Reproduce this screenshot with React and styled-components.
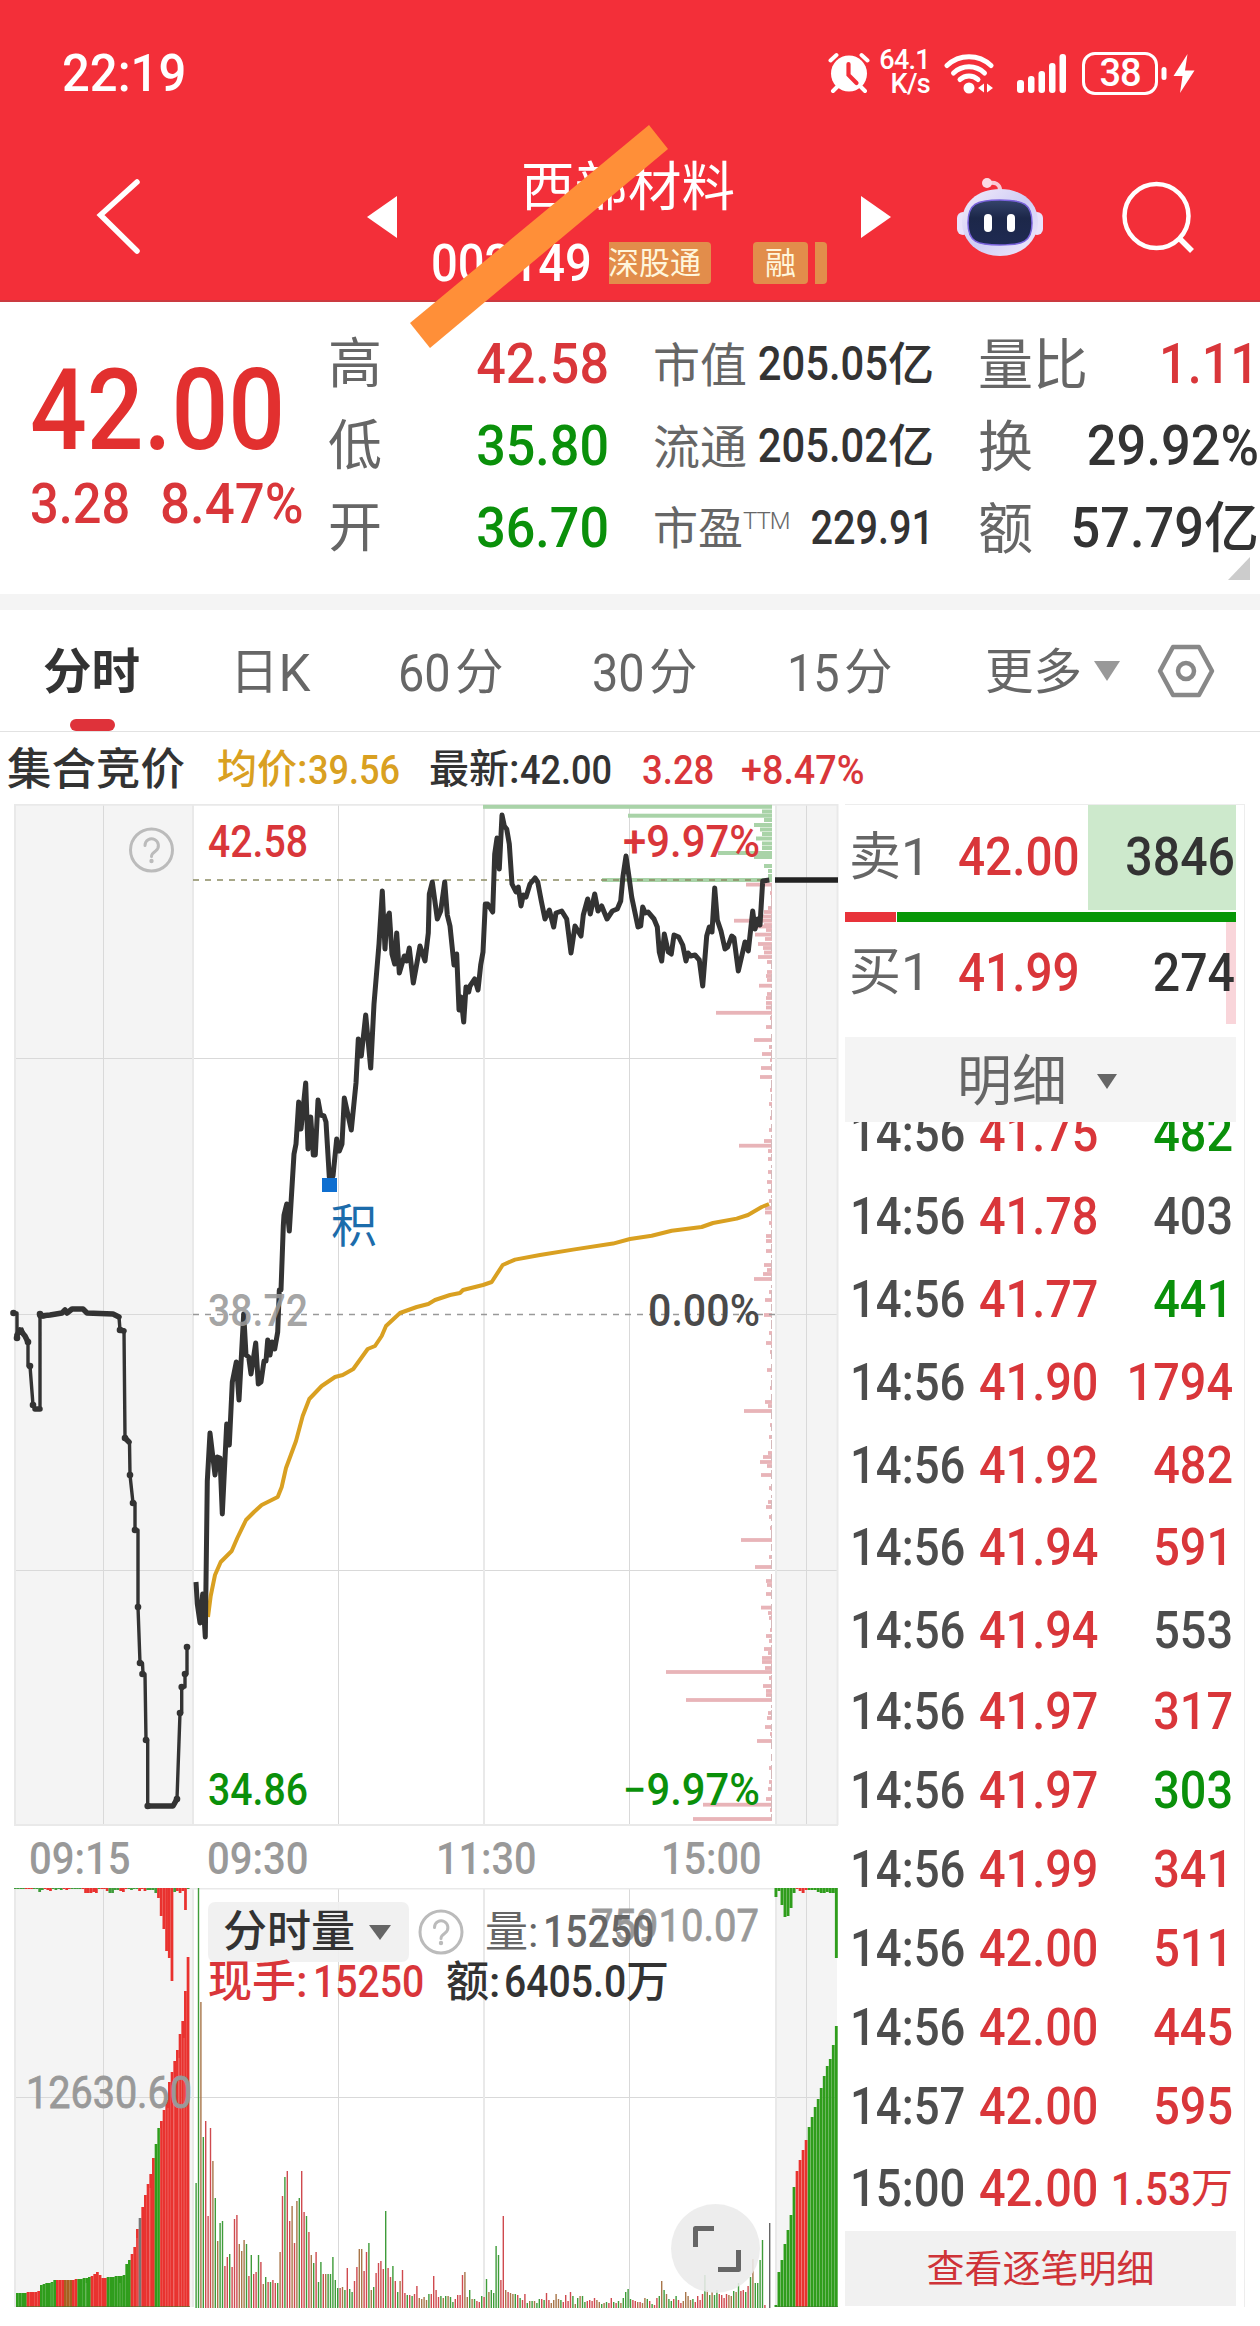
import React from 'react';
import styled, { createGlobalStyle } from 'styled-components';

const RED = '#d9363a';
const GREEN = '#0a900a';
const DARK = '#333';
const GRAY = '#666';

const GlobalStyle = createGlobalStyle`
  * {
    box-sizing: border-box;
  }
  body {
    margin: 0;
    background: #fff;
    font-family: Roboto, 'Noto Sans CJK SC', sans-serif;
    line-height: 1;
  }
  svg {
    display: block;
    flex: none;
  }
`;

const ticks = [
  ['14:56', '41.75', '482', GREEN],
  ['14:56', '41.78', '403', '#4d4d4d'],
  ['14:56', '41.77', '441', GREEN],
  ['14:56', '41.90', '1794', RED],
  ['14:56', '41.92', '482', RED],
  ['14:56', '41.94', '591', RED],
  ['14:56', '41.94', '553', '#4d4d4d'],
  ['14:56', '41.97', '317', RED],
  ['14:56', '41.97', '303', GREEN],
  ['14:56', '41.99', '341', RED],
  ['14:56', '42.00', '511', RED],
  ['14:56', '42.00', '445', RED],
  ['14:57', '42.00', '595', RED],
  ['15:00', '42.00', '1.53', RED],
];

const auctionLine =
  '13.5,1313 17,1313 17,1338 19,1330 22,1329 25,1337 28,1342 28,1366 30,1366 33,1405 35,1409 40,1409 40,1314 43,1317 50,1315 62,1313 65,1310 67,1313 72,1309 83,1309 87,1313 113,1314 119,1317 120,1330 124,1330 125,1438 129.5,1442 130,1475 133,1503 135,1503 135,1530 138,1530 138,1607 140,1663 142.5,1663 143,1674 145,1674 146,1740 147.7,1740 147.7,1806 173,1806 177,1799 180,1713 181.7,1713 181.7,1687 185,1687 185,1674 187,1674 187,1647';

const auctionDots =
  '13.5,1313 17,1338 28,1342 30,1366 33,1405 40,1314 120,1330 125,1438 130,1475 133,1503 135,1530 138,1607 140,1663 142.5,1674 146,1740 147.7,1806 177,1799 180,1713 181.7,1687 185,1674 187,1647';

const flatSections = '35,1409 40,1409 M40,1316 50,1315 62,1313 65,1310 67,1313 72,1309 83,1309 87,1313 113,1314 119,1317 M147.7,1806 173,1806 177,1799 M17,1335 20,1330 25,1336 28,1342 M120,1330 124,1331 M125,1438 129,1442';

const priceLine =
  '196,1582 197.3,1604 200,1623 202.7,1594 205.3,1637 207.3,1481 210,1433 215,1475 217.3,1457 220,1458 222.3,1514 226.7,1424 229.3,1445 232.3,1382 236.3,1362 239,1400 243.7,1314 246,1355 248.7,1357 251,1374 255.7,1343 258.3,1384 261,1382 264,1361 266,1361 267.7,1340 270,1355 272,1342 274.7,1349 277.7,1332 279.3,1290 281,1290 283.3,1226 284,1215 286.7,1204 289.3,1231 294,1154 296,1144 298.7,1102 301,1129 305.7,1083 308,1149 310.7,1117 313.3,1155 315.3,1155 318,1100 320.7,1115 324,1116 326,1122 329.3,1177 333,1176 336.7,1139 339.3,1151 342,1144 344.3,1098 351.3,1130 356,1083 358.3,1039 361.3,1056 365.7,1015 370.7,1068 374,1004 379,944 382.3,891 385,949 386.7,919 389.3,913 392,954 394.7,964 396.7,933 399.3,973 404.3,956 406.7,961 409.3,948 413.3,983 420,946 425,961 428.3,933 429.3,894 432.3,882 437.3,919 440.7,911 444.7,882 447.3,915 450,926 454,965 456.7,954 459,1010 461,997 463.7,1022 466,987 468.7,992 470,986 474.7,979 478,990 480.7,965 483,952 485.3,904 487.7,904 492.7,912 494.7,854 497,838 499.3,869 502,815 504.3,826 506.7,829 509.3,844 512,884 516,892 518.3,887 521,906 523.3,895 526,897 530,884 535,878 537.7,882 541.3,901 545,919 549.3,910 553.7,927 556,913 561.7,911 566.7,919 571,953 575,926 581,936 583.3,915 587.7,899 590.3,914 594.7,894 598,911 601.7,906 607,919 612.3,911 617.3,909 620.7,901 623,876 626,856 629.3,879 631.7,897 638,927 640.7,926 642.7,907 645.3,913 648,912 654,919 657.3,927 659.3,952 661.7,961 664.3,934 668.3,952 671.3,954 674,935 678.7,937 682.7,945 686,961 688,953 690.7,956 695,955 699.3,960 702.7,986 706.7,936 709.3,927 712,932 714.7,888 717.3,920 721,931 725,949 727.7,947 731.7,936 734,938 738.3,971 745,942 748.3,951 752.7,911 755,929 757.7,919 760,925 762.7,881 769.3,880';

const averageLine =
  '208,1617 210.7,1596 215,1575 220.7,1562 231.7,1551 237.3,1538 246,1520 254,1512 261.7,1505 277.7,1497 281.7,1487 286,1468 296,1441 302.7,1416 309.3,1399 321.7,1386 335,1377 342.7,1375 353.3,1369 367.7,1349 375,1346 381.7,1336 386,1326 400,1313 416.7,1307 428.3,1304 435,1300 450,1295 460,1293 463,1290 483,1285 491.7,1282 502.7,1265 515,1259.6 540,1255 573,1249.6 613,1243.6 630,1239 651.7,1235.7 671.7,1230.7 701.7,1227 713,1223 736.7,1218.6 748,1215 761.7,1207 769,1204';

// [y, length] of the bars growing leftwards from the 15:00 edge
const sellProfile = [
  [806.8, 289], [811.5, 10], [815.7, 144], [820, 8], [825, 18], [829.5, 12], [834, 10], [838.5, 16], [843.5, 10],
  [848, 10], [853, 54], [857, 18], [866, 8], [871, 4], [876, 4], [880, 170],
];
const buyProfile = [
  [884.6, 26], [893, 2], [898, 1], [908, 4], [912, 8], [916.5, 9], [920.7, 38], [925, 8], [926.5, 16], [930, 6], [934.6, 17],
  [939, 7], [944, 14], [948, 9], [952.5, 8], [957, 14], [962, 5], [972, 5], [976, 6], [980, 5], [985.7, 13], [994, 5],
  [998, 6], [1003, 6], [1007.5, 6], [1012.8, 56], [1018, 2], [1027, 6], [1040, 18], [1047, 3], [1054, 10], [1060, 2],
  [1068, 11], [1077, 12], [1090, 2], [1104, 3], [1118, 2], [1130, 3], [1141, 8], [1145.7, 33], [1151, 4], [1159, 4],
  [1172, 4], [1182, 5], [1191, 4], [1201, 3], [1208, 7], [1212.5, 7], [1223, 3], [1236, 6], [1241, 6], [1251, 6],
  [1265, 8], [1270, 5], [1274, 9], [1279, 18], [1292, 3], [1300, 7], [1315, 8], [1333, 3], [1343, 6], [1352, 2],
  [1370, 5], [1388, 2], [1402, 7], [1406, 4], [1411, 28], [1425, 2], [1437, 3], [1453, 4], [1457, 9], [1462, 12],
  [1466, 5], [1475, 11], [1488, 3], [1502, 4], [1507, 6], [1517, 3], [1528, 2], [1540, 31], [1557, 3], [1567, 17],
  [1581, 6], [1585, 5], [1594, 6], [1607.6, 11], [1613, 4], [1618, 3], [1630, 2], [1636, 6], [1641, 3], [1649, 8],
  [1653, 4], [1658, 10], [1662, 10], [1668, 7], [1672, 106], [1678, 3], [1686, 9], [1691, 6], [1695, 6], [1700, 86],
  [1713, 4], [1718, 5], [1727, 7], [1734, 2], [1741, 15], [1758, 1], [1768, 3], [1782, 3], [1789, 4], [1799, 6],
  [1804.7, 69], [1810, 2], [1819, 79],
];

const minuteVolumes = [
  125, 420, 306, 171, 187, 92, 180, 147, 110, 67, 85, 87, 42, 51, 54, 41, 89, 93, 64, 57, 68, 64, 32, 53, 34, 36, 53, 46,
  24, 31, 26, 26, 28, 25, 25, 56, 112, 131, 137, 87, 102, 65, 107, 110, 137, 96, 92, 76, 53, 45, 56, 26, 46, 34, 34, 34,
  34, 51, 28, 20, 20, 21, 18, 40, 19, 16, 27, 41, 59, 59, 37, 56, 65, 18, 21, 35, 45, 47, 39, 97, 40, 31, 42, 27, 16, 27,
  38, 15, 13, 13, 12, 14, 22, 10, 9, 11, 8, 14, 14, 32, 18, 11, 12, 10, 12, 12, 11, 6, 9, 13, 13, 33, 36, 11, 18, 9, 9,
  7, 6, 12, 11, 29, 16, 18, 15, 62, 53, 28, 92, 18, 16, 15, 14, 14, 13, 10, 8, 14, 5, 7, 7, 7, 5, 9, 9, 8, 15, 8, 5, 8,
  14, 9, 8, 6, 13, 7, 16, 12, 4, 10, 12, 12, 6, 7, 8, 7, 10, 8, 6, 4, 5, 6, 5, 10, 6, 5, 7, 5, 10, 16, 19, 9, 8, 7, 6,
  6, 5, 10, 9, 7, 4, 3, 10, 12, 27, 18, 14, 9, 7, 9, 12, 8, 5, 7, 16, 12, 8, 9, 6, 12, 8, 14, 33, 18, 13, 16, 13, 18,
  14, 13, 10, 14, 13, 12, 17, 16, 25, 17, 18, 16, 22, 31, 49, 25, 25, 48, 68, 3, 0, 85,
];
const minuteColors = 'ggogrrrogoggrrgrrrooogrgrrgrogrgrrgorgrrorogrrgrogrggrogggggrogrggrroorrgogrrrrgrrgrgorrg';

const toColor = { g: '#3f9c3a', r: '#cf4a4f', o: '#a8764a', k: '#666' };

// heights of the pre-open auction bars, one every ten seconds
const preVolumes = [
  14, 14, 14, 14, 15, 15, 15, 15, 16, 22, 23, 24, 24, 25, 27, 27, 27, 27, 27, 27, 27, 27, 28, 28, 28, 29, 29, 30, 31, 33,
  35, 32, 29, 29, 30, 30, 30, 31, 31, 31, 32, 43, 47, 53, 60, 78, 89, 100, 112, 123, 133, 149, 163, 179, 186, 197, 207,
  225, 235, 246, 257, 273, 286, 316, 350,
];
const preColors = 'ggggrrrrrggggggrrrooorrgggggrrrrrrgggggggggrrrkrrrrrggrrrrrrrrrrrrr';

const preHanging = [
  1, 1, 1, 1, 1, 1, 1, 1, 1, 4, 2, 1, 2, 3, 1, 2, 1, 2, 1, 2, 1, 1, 1, 1, 1, 1, 5, 5, 5, 4, 5, 1, 1, 1, 3, 5, 5, 2, 2,
  3, 4, 1, 1, 2, 1, 1, 3, 1, 3, 2, 2, 2, 5, 10, 28, 41, 63, 70, 93, 4, 3, 5, 3, 22, 1,
];

const postVolumes = [2, 35, 47, 63, 77, 92, 120, 136, 147, 157, 167, 180, 190, 200, 208, 219, 231, 241, 248, 262, 281];
const postHanging = [9, 3, 17, 29, 28, 20, 5, 1, 3, 5, 2, 2, 2, 2, 4, 5, 5, 4, 5, 5, 70];
const postColors = 'gggggggrrrrgggggggggg';

const Page = styled.div`
  width: 1260px;
  height: 2326px;
  overflow: hidden;
  position: relative;
`;

const Num = styled.span`
  display: inline-flex;
  flex: none;
  justify-content: ${(p) => (p.$right ? 'flex-end' : 'flex-start')};
  width: ${(p) => p.$w}px;
  font-size: ${(p) => p.$size}px;
  font-weight: ${(p) => p.$weight || 500};
  color: ${(p) => p.$color || 'inherit'};
  white-space: nowrap;
  transform: scaleX(${(p) => p.$sx || 0.9});
  transform-origin: ${(p) => (p.$right ? 'right' : 'left')} center;
`;

const Cn = styled.span`
  flex: none;
  ${(p) => p.$w && `width: ${p.$w}px;`}
  font-size: ${(p) => p.$size}px;
  font-weight: ${(p) => p.$weight || 400};
  color: ${(p) => p.$color || GRAY};
  white-space: nowrap;
`;

const Header = styled.header`
  height: 302px;
  background: #f32f39;
  border-bottom: 2px solid #cb3a40;
  color: #fff;
`;

const StatusBar = styled.div`
  height: 146px;
  padding: 0 64px 0 62px;
  display: flex;
  align-items: center;
  justify-content: space-between;
`;

const StatusIcons = styled.div`
  display: flex;
  align-items: center;
`;

const NetSpeed = styled.div`
  width: 56px;
  margin-left: 13px;
  padding: 0 9px 2px 0;
  display: flex;
  flex-direction: column;
  align-items: flex-end;
  font-size: 27px;
  font-weight: 500;
  line-height: 24px;
  letter-spacing: -0.7px;
`;

const Battery = styled.div`
  width: 76px;
  height: 43px;
  margin-left: 15px;
  border: 3px solid #fff;
  border-radius: 13px;
  display: flex;
  align-items: center;
  justify-content: center;
  font-size: 38px;
  font-weight: 500;
  letter-spacing: -1px;
`;

const NavBar = styled.nav`
  height: 138px;
  padding-left: 96px;
  display: grid;
  grid-template-columns: 271px 63px 400px 31px 95px 166px auto;
  align-items: center;
`;

const TitleBlock = styled.div`
  display: flex;
  flex-direction: column;
  align-items: center;
  gap: 23px;
  padding-top: 15px;
`;

const Title = styled.div`
  font-size: 53.5px;
  padding-right: 4px;
`;

const CodeRow = styled.div`
  width: 398px;
  display: flex;
  align-items: center;
`;

const Tag = styled.span`
  width: ${(p) => p.$w}px;
  height: 42px;
  margin-left: ${(p) => p.$ml}px;
  display: flex;
  align-items: center;
  justify-content: ${(p) => (p.$clip ? 'flex-end' : 'center')};
  padding-right: ${(p) => (p.$clip ? 10 : 0)}px;
  overflow: hidden;
  white-space: nowrap;
  border-radius: ${(p) => (p.$clip ? '0 4px 4px 0' : '4px')};
  background: #e28d4b;
  color: #fff6dc;
  font-size: 31px;
`;

const Strike = styled.svg`
  position: absolute;
  left: 400px;
  top: 120px;
`;

const Quote = styled.section`
  position: relative;
  height: 292px;
  display: flex;
`;

const PriceBlock = styled.div`
  width: 328px;
  padding: 52px 0 0 30px;
  color: #e2302f;
`;

const Change = styled.div`
  display: flex;
  margin-top: 10px;
  color: ${RED};
`;

const Stats = styled.div`
  flex: 1;
  padding-top: 21px;
  display: grid;
  grid-template-columns: 281px 281px 281px;
  grid-auto-rows: 82px;
  column-gap: 44px;
`;

const Stat = styled.div`
  display: flex;
  align-items: center;
  justify-content: space-between;
`;

const StatName = styled.div`
  padding-top: 2px;
  font-size: ${(p) => p.$size}px;
  color: ${GRAY};
  white-space: nowrap;
`;

const StatValue = styled.div`
  display: flex;
  align-items: center;
  color: ${DARK};
`;

const Ttm = styled.span`
  align-self: flex-start;
  width: 60px;
  margin: 22px auto 0 0;
  font-size: 24px;
  font-weight: 300;
  letter-spacing: -1px;
  color: ${GRAY};
`;

const Corner = styled.div`
  position: absolute;
  right: 10px;
  top: 255px;
  border-left: 22px solid transparent;
  border-bottom: 23px solid #ccc;
`;

const Divider = styled.div`
  height: 16px;
  background: #f4f4f4;
`;

const Tabs = styled.div`
  height: 122px;
  padding: 6px 0 0 43px;
  display: grid;
  grid-template-columns: 187px 168px 194px 195px 198px 109px 63px auto;
  align-items: center;
  border-bottom: 1px solid #e2e2e2;
  > svg,
  > span {
    position: relative;
    top: -3px;
  }
`;

const Tab = styled.div`
  position: relative;
  font-size: 48.5px;
  color: ${(p) => (p.$active ? DARK : GRAY)};
  font-weight: ${(p) => (p.$active ? 700 : 400)};
  display: flex;
  align-items: center;
  white-space: nowrap;
`;

const TabMark = styled.div`
  position: absolute;
  left: 27px;
  top: 70px;
  width: 45px;
  height: 12px;
  border-radius: 6px;
  background: #df323a;
`;

const Arrow = styled.span`
  display: block;
  flex: none;
  width: 0;
  height: 0;
  border-left: ${(p) => p.$s}px solid transparent;
  border-right: ${(p) => p.$s}px solid transparent;
  border-top: ${(p) => p.$h}px solid ${(p) => p.$color || GRAY};
`;

const InfoRow = styled.div`
  height: 72px;
  padding: 4px 0 0 7px;
  display: grid;
  grid-template-columns: 210px 212px 213px 99px auto;
  align-items: center;
`;

const InfoItem = styled.div`
  display: flex;
  align-items: center;
  color: ${(p) => p.$color || DARK};
`;

const Main = styled.main`
  display: flex;
`;

const Charts = styled.div`
  width: 845px;
`;

const Axis = styled.div`
  height: 62px;
  padding: 3px 0 0 29px;
  display: grid;
  grid-template-columns: 178px 229px 225px auto;
  align-items: center;
  color: #999;
`;

const VolumeBox = styled.div`
  position: relative;
  height: 420px;
`;

const VolumeHead = styled.div`
  position: absolute;
  left: 208px;
  top: 14px;
  width: 630px;
`;

const HeadLine = styled.div`
  display: flex;
  align-items: center;
`;

const ValueLine = styled(HeadLine)`
  margin-top: -2px;
`;

const Chip = styled.div`
  width: 201px;
  height: 60px;
  padding-left: 15px;
  display: flex;
  align-items: center;
  gap: 14px;
  border-radius: 7px;
  background: rgba(240, 240, 240, 0.92);
`;

const Expand = styled.div`
  position: absolute;
  left: 671px;
  top: 316px;
  width: 89px;
  height: 89px;
  border-radius: 50%;
  background: rgba(234, 234, 234, 0.88);
`;

const Side = styled.aside`
  width: 400px;
  height: 1503px;
  padding-right: 8px;
  border-top: 1px solid #ededed;
  border-right: 1px solid #ededed;
  display: flex;
  flex-direction: column;
`;

const Depth = styled.div`
  height: ${(p) => p.$h}px;
  padding-left: 4px;
  display: grid;
  grid-template-columns: 109px 130px auto;
  align-items: center;
  background: ${(p) => `linear-gradient(${p.$bar}, ${p.$bar}) right top / ${p.$len}px ${p.$barH}px no-repeat`};
`;

const Ratio = styled.div`
  height: 10px;
  margin-top: 2px;
  background: linear-gradient(90deg, #e8333a 0 51px, #fff 51px 52px, #079707 52px);
`;

const DetailHead = styled.div`
  flex: none;
  height: 85px;
  padding: 3px 0 0 112px;
  display: flex;
  align-items: center;
  gap: 30px;
  background: #f4f4f4;
`;

const TickList = styled.div`
  flex: none;
  height: 1109px;
  overflow: hidden;
`;

const Tick = styled.div`
  height: ${(p) => p.$h}px;
  padding-left: 5px;
  display: grid;
  grid-template-columns: 129px 125px auto;
  align-items: center;
  color: #4d4d4d;
  &:first-child {
    margin-top: -29px;
  }
`;

const TickVolume = styled.div`
  display: flex;
  align-items: center;
  justify-content: flex-end;
  padding-right: 3px;
  color: ${(p) => p.$color};
`;

const MoreLink = styled.div`
  flex: none;
  height: 75px;
  display: flex;
  align-items: center;
  justify-content: center;
  background: #f1f1f1;
  color: #cf3338;
  font-size: 38px;
`;

const Help = ({ size = 46 }) => (
  <svg width={size} height={size} viewBox="0 0 46 46" fill="none" stroke="#bbb" strokeWidth="3">
    <circle cx="23" cy="23" r="21" />
    <path d="M16.5 18.5a6.7 6.7 0 1 1 10.8 5.3c-2.6 1.8-4.3 2.9-4.3 5.8" strokeLinecap="round" />
    <circle cx="23" cy="34" r="2.2" fill="#bbb" stroke="none" />
  </svg>
);

const AlarmIcon = () => (
  <svg width="42" height="42" viewBox="0 0 42 42">
    <circle cx="21" cy="21.500" r="18" fill="#fff" />
    <path d="M10 34l-5 5M32 34l5 5M2.500 8.500l6-5.500M39.500 8.500l-6-5.500" stroke="#fff" strokeWidth="4" strokeLinecap="round" />
    <path d="M20.500 12v11l8 8" stroke="#f32f39" strokeWidth="4.200" fill="none" strokeLinecap="round" />
  </svg>
);

const WifiIcon = () => (
  <svg width="50" height="42" viewBox="0 0 50 42">
    <g fill="none" stroke="#fff" strokeWidth="5" strokeLinecap="round">
      <path d="M3 13.500a32 32 0 0 1 44 0" />
      <path d="M9.500 21a22.500 22.500 0 0 1 31 0" />
      <path d="M16 27.500a13 13 0 0 1 18 0" />
    </g>
    <circle cx="25" cy="36" r="5.500" fill="#fff" />
    <path d="M40 31.500v9l-6-4.500zM43 31.500v9l6-4.500z" fill="#fff" />
  </svg>
);

const SignalIcon = () => (
  <svg width="50" height="42" viewBox="0 0 50 42" fill="#fff">
    <rect x="0" y="28" width="7" height="13" rx="3" />
    <rect x="11" y="24" width="6.500" height="17" rx="3" />
    <rect x="21.500" y="19" width="6.500" height="22" rx="3" />
    <rect x="32" y="11" width="6.500" height="30" rx="3" />
    <rect x="42.500" y="2" width="6.500" height="39" rx="3" />
  </svg>
);

const Robot = () => (
  <svg width="88" height="80" viewBox="0 0 88 80">
    <defs>
      <linearGradient id="shell" x1="0" y1="0" x2="1" y2="1">
        <stop offset="0" stopColor="#f4ecfa" />
        <stop offset="0.5" stopColor="#cfcdf5" />
        <stop offset="1" stopColor="#f3eafc" />
      </linearGradient>
      <linearGradient id="visor" x1="0" y1="0" x2="0" y2="1">
        <stop offset="0" stopColor="#35446b" />
        <stop offset="0.4" stopColor="#1c2749" />
        <stop offset="1" stopColor="#1f2a52" />
      </linearGradient>
    </defs>
    <path d="M44 13c0-6-5-8-11-7" fill="none" stroke="#f9c9d4" strokeWidth="4" />
    <circle cx="31" cy="6" r="5" fill="#fbdbe4" />
    <rect x="1" y="35" width="12" height="23" rx="6" fill="#e9e2fb" />
    <rect x="75" y="35" width="12" height="23" rx="6" fill="#e9e2fb" />
    <path d="M44 12c23 0 38 14 38 33S66 79 44 79 6 64 6 45s15-33 38-33z" fill="url(#shell)" />
    <path d="M44 23c24 0 32 4 32 23s-9 22-32 22-32-3-32-22 8-23 32-23z" fill="url(#visor)" stroke="#7a63dd" strokeWidth="1.500" />
    <rect x="28" y="37" width="8" height="18" rx="4" fill="#fff" />
    <rect x="51" y="37" width="8" height="18" rx="4" fill="#fff" />
  </svg>
);

const label = { fontSize: 44, fontWeight: 500, lengthAdjust: 'spacingAndGlyphs' };

const PriceChart = () => (
  <svg width="845" height="1022" viewBox="0 804 845 1022">
    <rect x="15" y="804" width="178" height="1021" fill="#f4f4f4" />
    <rect x="775" y="804" width="62" height="1021" fill="#f4f4f4" />
    <path d="M103.500 804V1825M338.500 804V1825M629.500 804V1825M806.500 804V1825M15 1058.500H837M15 1570.500H837M15 1314.500H193M775 1314.500H837" stroke="#d9d9d9" />
    <path d="M484 804V1825M193 804V1825M15 804V1825M776 804V1825M837.500 804V1825M14 804.800H838M14 1825H838" stroke="#e9e9e9" strokeWidth="2" />
    <g fill="#a9d3a8">
      {sellProfile.map(([y, len]) => (
        <rect key={y} x={772 - len} y={y - 2} width={len} height="4" />
      ))}
    </g>
    <g fill="#e8b4b8">
      {buyProfile.map(([y, len]) => (
        <rect key={y} x={772 - len} y={y - 1.9} width={len} height="3.8" />
      ))}
    </g>
    <path d="M771.500 884V1820" stroke="#d5b9bb" strokeDasharray="7 4 3 2 9 5" />
    <path d="M193 880H769" stroke="#8b8b62" strokeWidth="1.500" strokeDasharray="6 6" />
    <path d="M193 1314.500H775" stroke="#999" strokeWidth="1.500" strokeDasharray="6 6" />
    <polyline points={averageLine} fill="none" stroke="#d9a021" strokeWidth="4" strokeLinejoin="round" />
    <polyline points={auctionLine} fill="none" stroke={DARK} strokeWidth="3.400" strokeLinejoin="round" />
    <path d={`M${flatSections}`} fill="none" stroke={DARK} strokeWidth="5.500" strokeLinecap="round" strokeLinejoin="round" />
    {auctionDots.split(' ').map((p) => (
      <circle key={p} cx={p.split(',')[0]} cy={p.split(',')[1]} r="3.300" fill={DARK} />
    ))}
    <polyline points={priceLine} fill="none" stroke={DARK} strokeWidth="5" strokeLinejoin="round" />
    <text x="208" y="1326" textLength="100" fill="#999" fillOpacity=".9" {...label}>38.72</text>
    <path d="M775 880H838" stroke="#222" strokeWidth="5.500" />
    <rect x="322" y="1178" width="15" height="14" fill="#0f6fd0" />
    <text x="331" y="1242" fontSize="46" fill="#1c6cab">积</text>
    <text x="208" y="857" textLength="100" fill={RED} {...label}>42.58</text>
    <text x="623" y="857" textLength="137" fill={RED} {...label}>+9.97%</text>
    <text x="648" y="1326" textLength="112" fill="#4a4a4a" {...label}>0.00%</text>
    <text x="208" y="1805" textLength="100" fill={GREEN} {...label}>34.86</text>
    <text x="623" y="1805" textLength="137" fill={GREEN} {...label}>−9.97%</text>
    <svg x="128.500" y="827" width="46" height="46"><Help /></svg>
  </svg>
);

const VolumeChart = () => (
  <svg width="845" height="420" viewBox="0 0 845 420">
    <rect x="15" y="0" width="178" height="419" fill="#f4f4f4" />
    <rect x="775" y="0" width="62" height="419" fill="#f4f4f4" />
    <path d="M103.500 0V419M338.500 0V419M629.500 0V419M806.500 0V419M15 209.500H837" stroke="#d9d9d9" />
    <path d="M484 0V419M15 0V419M193 0V419M776 0V419M14 .5H838" stroke="#e9e9e9" strokeWidth="2" />
    {minuteVolumes.map((h, i) => {
      const code = i > 238 ? 'k' : minuteColors[i] || 'rgogrogrrog'[(i * 7 + (i % 5)) % 11];
      return <rect key={i} x={195.4 + i * 2.4} y={420 - h} width="1.4" height={h} fill={toColor[code]} />;
    })}
    {preVolumes.map((h, i) => (
      <g key={i} fill={{ g: '#2f9d1c', r: '#e9322f', o: '#a8601f', k: '#777' }[preColors[i]]}>
        <rect x={16 + i * 2.667} y={419 - h} width="2.75" height={h} />
      </g>
    ))}
    {preHanging.map((h, i) => (
      <rect key={i} x={14 + i * 2.7} y="0" width="2.75" height={h} fill={h > 8 || (i > 25 && i < 31) || i % 7 > 3 ? '#e9322f' : '#3f9c3a'} />
    ))}
    <path d="M52 395V419M86 395V419M120 395V419M137 350V419M150 300V419M160 240V419M168 220V419M174 200V419M179 170V419M184 150V419" stroke="#fff" strokeOpacity=".22" />
    {postVolumes.map((h, i) => (
      <g key={i} fill={postColors[i] === 'g' ? '#2f9d1c' : '#e9322f'}>
        <rect x={774.5 + i * 3.02} y={419 - h} width="2.800" height={h} />
        <rect x={774.5 + i * 3.02} y="0" width="2.900" height={postHanging[i]} />
      </g>
    ))}
    <path d="M775 418.500H838M16 418.500H190" stroke="#3c7d2c" strokeWidth="1" strokeOpacity=".6" />
    <text x="26" y="220" fontSize="44" fontWeight="400" stroke="#999" strokeWidth=".8" textLength="166" lengthAdjust="spacingAndGlyphs" fill="#999">12630.60</text>
    <text x="591" y="53" fontSize="44" fontWeight="400" stroke="#999" strokeWidth=".8" textLength="168" lengthAdjust="spacingAndGlyphs" fill="#999">75910.07</text>
  </svg>
);

const StatRow = ({ name, size = 52, value, color, unit, numSize = 56, children, w = 140, sx = 0.93, unitSize = 46 }) => (
  <Stat>
    <StatName $size={size}>{name}</StatName>
    {children}
    <StatValue>
      <Num $right $w={w} $size={numSize} $sx={sx} $color={color}>{value}</Num>
      {unit && <Cn $size={unitSize} $color={DARK} $weight={500}>{unit}</Cn>}
    </StatValue>
  </Stat>
);

const tickHeight = (i) => {
  if (i < 7) return 82.8;
  return i === 13 ? 84 : 79;
};

const App = () => {
  return (
    <Page>
      <GlobalStyle />
      <Header>
        <StatusBar>
          <Num $w={130} $size={51} $sx={0.96} $weight={500}>22:19</Num>
          <StatusIcons>
            <AlarmIcon />
            <NetSpeed>
              <span>64.1</span>
              <span>K/s</span>
            </NetSpeed>
            <svg width="5" height="1" />
            <WifiIcon />
            <svg width="23" height="1" />
            <SignalIcon />
            <Battery>38</Battery>
            <svg width="38" height="43" viewBox="0 0 38 43" fill="#fff">
              <rect x="3.500" y="15" width="5" height="13" rx="2.500" />
              <path d="M29.500 2L15.500 24h9l-2.500 17L36.500 18.500h-9.500z" />
            </svg>
          </StatusIcons>
        </StatusBar>
        <NavBar>
          <svg width="46" height="78" viewBox="0 0 46 78" fill="none" stroke="#fff" strokeWidth="5.500" strokeLinecap="round">
            <path d="M41 4L4.500 37L41 73" />
          </svg>
          <svg width="30" height="42" viewBox="0 0 30 42"><path d="M0 21L30 0V42z" fill="#fff" /></svg>
          <TitleBlock>
            <Title>西部材料</Title>
            <CodeRow>
              <Num $w={178} $size={51} $sx={0.925} $weight={500}>002149</Num>
              <Tag $w={102} $ml={0} $clip>深股通</Tag>
              <Tag $w={55} $ml={42}>融</Tag>
              <Tag $w={12} $ml={7} $clip />
            </CodeRow>
          </TitleBlock>
          <span />
          <svg width="30" height="42" viewBox="0 0 30 42"><path d="M30 21L0 0V42z" fill="#fff" /></svg>
          <Robot />
          <svg width="72" height="72" viewBox="0 0 72 72" fill="none" stroke="#fff" strokeWidth="4.500">
            <circle cx="34.500" cy="35" r="32" />
            <path d="M57 57L70 70" strokeWidth="5.500" />
          </svg>
        </NavBar>
      </Header>
      <Strike width="280" height="240">
        <polygon points="249,5 268,29 30,228 10,203" fill="#ff8f38" />
      </Strike>

      <Quote>
        <PriceBlock>
          <Num $w={290} $size={113} $sx={0.885}>42.00</Num>
          <Change>
            <Num $w={130} $size={55} $sx={0.92}>3.28</Num>
            <Num $w={160} $size={55} $sx={0.96}>8.47%</Num>
          </Change>
        </PriceBlock>
        <Stats>
          <StatRow name="高" size={54} value="42.58" color={RED} />
          <StatRow name="市值" size={47} value="205.05" numSize={48} sx={0.87} unit="亿" />
          <StatRow name="量比" size={55} value="1.11" color={RED} sx={0.9} />
          <StatRow name="低" size={54} value="35.80" color={GREEN} />
          <StatRow name="流通" size={47} value="205.02" numSize={48} sx={0.87} unit="亿" />
          <StatRow name="换" size={55} value="29.92%" sx={0.935} />
          <StatRow name="开" size={54} value="36.70" color={GREEN} />
          <StatRow name="市盈" size={45} value="229.91" numSize={48} sx={0.825} w={110}>
            <Ttm>TTM</Ttm>
          </StatRow>
          <StatRow name="额" size={55} value="57.79" unit="亿" unitSize={55} sx={0.935} />
        </Stats>
        <Corner />
      </Quote>
      <Divider />

      <Tabs>
        <Tab $active>
          分时
          <TabMark />
        </Tab>
        <Tab>日<Num $w={30} $size={51} $weight={400} $sx={1}>K</Num></Tab>
        <Tab><Num $w={57} $size={52} $weight={400}>60</Num>分</Tab>
        <Tab><Num $w={57} $size={52} $weight={400}>30</Num>分</Tab>
        <Tab><Num $w={57} $size={52} $weight={400}>15</Num>分</Tab>
        <Tab>更多</Tab>
        <Arrow $s={13} $h={20} $color="#999" />
        <svg width="58" height="58" viewBox="0 0 58 58" fill="none" stroke="#888" strokeWidth="4.500">
          <path d="M16 5h26l13 24l-13 24h-26l-13-24z" strokeLinejoin="round" />
          <circle cx="29" cy="29" r="8" />
        </svg>
      </Tabs>

      <InfoRow>
        <Cn $size={44.5} $color={DARK} $weight={500}>集合竞价</Cn>
        <InfoItem $color="#d9a021">
          <Cn $size={40} $color="inherit" $weight={500}>均价:</Cn>
          <Num $w={90} $size={41} $sx={0.88}>39.56</Num>
        </InfoItem>
        <InfoItem>
          <Cn $size={40} $color="inherit" $weight={500}>最新:</Cn>
          <Num $w={90} $size={41} $sx={0.88}>42.00</Num>
        </InfoItem>
        <Num $w={80} $size={41} $sx={0.89} $color={RED}>3.28</Num>
        <Num $w={130} $size={41} $sx={0.92} $color={RED}>+8.47%</Num>
      </InfoRow>

      <Main>
        <Charts>
          <PriceChart />
          <Axis>
            <Num $w={110} $size={44} $sx={0.91}>09:15</Num>
            <Num $w={110} $size={44} $sx={0.91}>09:30</Num>
            <Num $w={110} $size={44} $sx={0.9}>11:30</Num>
            <Num $w={110} $size={44} $sx={0.9}>15:00</Num>
          </Axis>
          <VolumeBox>
            <VolumeChart />
            <VolumeHead>
              <HeadLine>
                <Chip>
                  <Cn $size={44} $color={DARK} $weight={500}>分时量</Cn>
                  <Arrow $s={11} $h={15} />
                </Chip>
                <svg width="9" height="1" />
                <Help />
                <svg width="21" height="1" />
                <Cn $size={43} $w={58}>量:</Cn>
                <Num $w={120} $size={44} $sx={0.89} $color={GRAY}>15250</Num>
              </HeadLine>
              <ValueLine>
                <Cn $size={44} $w={105} $color={RED} $weight={500}>现手:</Cn>
                <Num $w={133} $size={44} $sx={0.89} $color={RED}>15250</Num>
                <Cn $size={43} $w={58} $color={DARK} $weight={500}>额:</Cn>
                <Num $w={122} $size={44} $sx={0.89} $color={DARK}>6405.0</Num>
                <Cn $size={43} $color={DARK} $weight={500}>万</Cn>
              </ValueLine>
            </VolumeHead>
            <Expand>
              <svg width="89" height="89" viewBox="0 0 89 89" fill="none" stroke="#666" strokeWidth="5">
                <path d="M24.500 43V24.500H43M67.500 46V65.500H47" strokeLinejoin="round" />
              </svg>
            </Expand>
          </VolumeBox>
        </Charts>

        <Side>
          <Depth $h={105} $bar="#cde9cc" $len={148} $barH={105}>
            <Cn $size={52}>卖1</Cn>
            <Num $w={129} $size={53} $sx={0.9} $color={RED}>42.00</Num>
            <Num $right $w={147} $size={53} $sx={0.91} $color={DARK}>3846</Num>
          </Depth>
          <Ratio />
          <Depth $h={102} $bar="#f9d5da" $len={10} $barH={107}>
            <Cn $size={52}>买1</Cn>
            <Num $w={129} $size={53} $sx={0.9} $color={RED}>41.99</Num>
            <Num $right $w={147} $size={53} $sx={0.91} $color={DARK}>274</Num>
          </Depth>
          <svg width="1" height="13" />
          <DetailHead>
            <Cn $size={55}>明细</Cn>
            <Arrow $s={10.5} $h={15} />
          </DetailHead>
          <TickList>
            {ticks.map(([time, price, volume, color], i) => (
              <Tick key={i} $h={tickHeight(i)}>
                <Num $w={129} $size={52} $sx={0.875}>{time}</Num>
                <Num $w={124} $size={52} $sx={0.9} $color={RED}>{price}</Num>
                <TickVolume $color={color}>
                  {i === 13 ? (
                    <>
                      <Num $right $w={80} $size={46} $sx={0.88}>{volume}</Num>
                      <Cn $size={42} $color="inherit">万</Cn>
                    </>
                  ) : (
                    <Num $right $w={120} $size={52} $sx={0.9}>{volume}</Num>
                  )}
                </TickVolume>
              </Tick>
            ))}
          </TickList>
          <MoreLink>查看逐笔明细</MoreLink>
        </Side>
      </Main>
    </Page>
  );
};

export default App;
